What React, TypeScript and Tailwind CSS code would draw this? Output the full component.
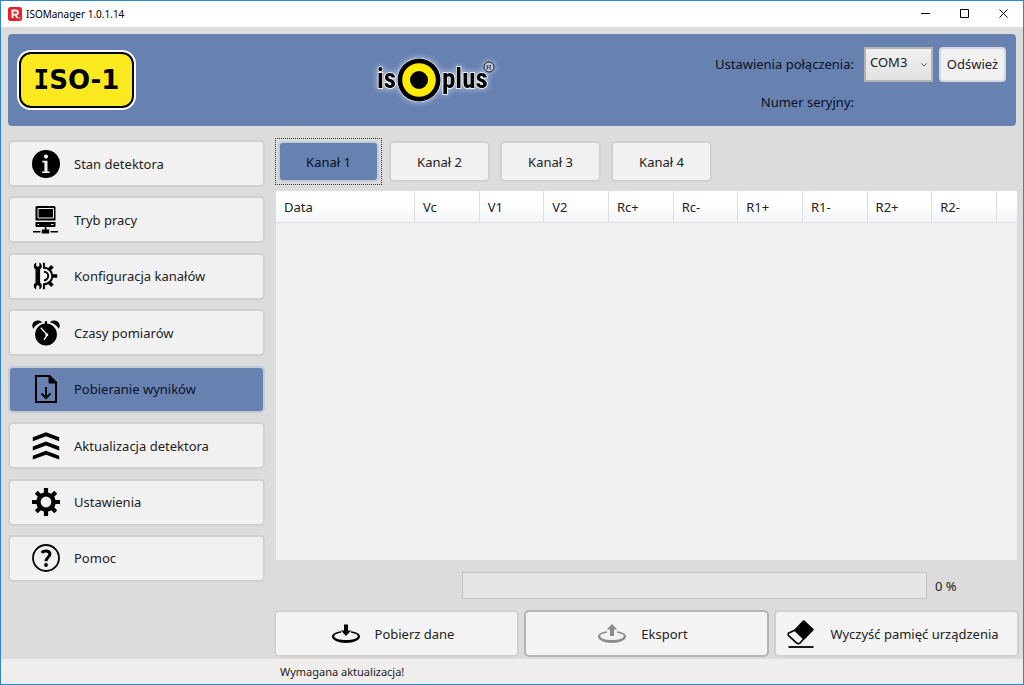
import React, { useState } from 'react';
import clsx from 'clsx';

const InfoIcon = () => (
  <svg viewBox="0 0 28 28" className="w-7 h-7 shrink-0">
    <circle cx="14" cy="14" r="14" fill="#000" />
    <circle cx="14" cy="6.6" r="2.1" fill="#f1f1f1" />
    <path d="M10.300 10.800h5.200v10.600h2.200V23h-7.600v-1.600h2.300v-9h-2.100z" fill="#f1f1f1" />
  </svg>
);

const ComputerIcon = () => (
  <svg viewBox="0 0 28 28" className="w-7 h-7 shrink-0">
    <path d="M5 0h17a1.500 1.500 0 0 1 1.500 1.500V14.500h-20V1.500A1.500 1.500 0 0 1 5 0z" />
    <path d="M6 2.500h15.500v9.500H6z" fill="none" stroke="#f1f1f1" />
    <path d="M3.500 16h20v4a1 1 0 0 1-1 1h-18a1 1 0 0 1-1-1z" />
    <path d="M5.500 18.500H7M19 18.500h2.500" stroke="#f1f1f1" strokeWidth="1.200" />
    <path d="M12.800 21h1.600v2.500h2.800v4h-7.400v-4h3zM1 25h7.500v1.500H1zM18.500 25H26v1.500h-7.500z" />
  </svg>
);

const ToolsIcon = () => (
  <svg viewBox="0 0 28 28" className="w-7 h-7 shrink-0">
    <path d="M4.200.5v3.200l1.600 1.200 1.600-1.200V.5C9 1.200 9.800 2.600 9.800 4.200c0 1.300-.6 2.300-1.700 3v13.600c1.100.7 1.700 1.700 1.700 3 0 1.600-.8 3-2.400 3.700v-3.200l-1.600-1.200-1.600 1.200v3.200c-1.600-.7-2.400-2.100-2.400-3.700 0-1.300.6-2.300 1.700-3V7.200c-1.100-.7-1.700-1.700-1.700-3 0-1.600.8-3 2.400-3.700z" />
    <path d="M12 .8v5c4.700 0 8.300 3.700 8.300 8.200s-3.600 8.200-8.300 8.200v5" fill="none" stroke="#000" strokeWidth="1.900" />
    <path d="M12 9.800a4.200 4.200 0 0 1 0 8.400" fill="none" stroke="#000" strokeWidth="1.900" />
    <path d="M17.200 7.400l3.200-3.200M20.500 14h4.700M17.200 20.600l3.200 3.200" stroke="#000" strokeWidth="3.600" />
  </svg>
);

const AlarmIcon = () => (
  <svg viewBox="0 0 28 28" className="w-7 h-7 shrink-0">
    <path d="M1.200 9.800C-.8 6.500.500 2.600 4.200 1.700c2.300-.6 4.500 0 5.900 1.600C6 4.500 3.100 6.700 1.200 9.800zM26.800 9.800c2-3.300.7-7.200-3-8.100-2.300-.6-4.500 0-5.900 1.600 4.100 1.200 7 3.400 8.900 6.500z" />
    <circle cx="14" cy="15.500" r="10.900" />
    <path d="M12.900 2.200h2.200V6h-2.200z" />
    <path d="M8.800 8.800l6.400 7-3.200 5" fill="none" stroke="#f1f1f1" strokeWidth="1.400" />
    <circle cx="14.800" cy="15.700" r="1.500" fill="#f1f1f1" />
  </svg>
);

const FileDownIcon = () => (
  <svg viewBox="0 0 28 28" className="w-7 h-7 shrink-0">
    <path d="M4 1h13.500l6.500 6.500V27H4z" fill="none" stroke="#000" strokeWidth="2" />
    <path d="M17 1l7 7h-7z" stroke="#000" />
    <path d="M14 12v11M9.500 18.500L14 23l4.500-4.500" fill="none" stroke="#000" strokeWidth="2" />
  </svg>
);

const ChevronsIcon = () => (
  <svg viewBox="0 0 28 28" className="w-7 h-7 shrink-0">
    <path d="M14 .3l13.200 5v3.900L14 4.300.8 9.200V5.300zM14 9.500l13.200 5v3.900L14 13.500.8 18.400v-3.900zM14 18.700l13.200 5v3.900L14 22.700.8 27.600v-3.900z" />
  </svg>
);

const GearIcon = () => (
  <svg viewBox="0 0 28 28" className="w-7 h-7 shrink-0">
    <path d="M14 0v28M0 14h28M4.300 4.300l19.400 19.400M23.700 4.300L4.300 23.700" stroke="#000" strokeWidth="4.200" />
    <circle cx="14" cy="14" r="9.800" />
    <circle cx="14" cy="14" r="5.400" fill="#f1f1f1" />
  </svg>
);

const HelpIcon = () => (
  <svg viewBox="0 0 28 28" className="w-7 h-7 shrink-0">
    <circle cx="14" cy="14" r="13" fill="none" stroke="#000" strokeWidth="1.800" />
    <path d="M9.800 8.800c.9-1.300 2.300-1.800 4-1.800 2.700 0 4.100 1.200 4.100 3.200 0 3-3.900 3.200-3.900 7" fill="none" stroke="#000" strokeWidth="3" />
    <circle cx="14" cy="21" r="1.900" />
  </svg>
);

const DiskIcon: React.FC<{ up?: boolean }> = ({ up }) => (
  <svg viewBox="0 0 28 20" className="w-7 h-5 shrink-0" fill={up ? '#8a8a8a' : '#000'}>
    <path d="M9 7.300C3.800 8 0 9.900 0 12.600 0 16.200 6 19 14 19s14-2.800 14-6.400c0-2.700-3.800-4.600-9-5.300v1.500c4 .6 6.800 1.800 6.800 3.400 0 2.200-5.300 3.800-11.800 3.800S2.200 14.400 2.200 12.200c0-1.600 2.800-2.800 6.800-3.400z" />
    <path d={up ? 'M14 0l5.200 5.500h-3.200V12h-4V5.500H8.800z' : 'M12 .5h4v6h3.200L14 12 8.800 6.500H12z'} />
  </svg>
);

const EraserIcon = () => (
  <svg viewBox="0 0 28 28" className="w-7 h-7 shrink-0">
    <path d="M17.500.5l8.800 8.300c.6.600.6 1.200 0 1.800l-8.800 9L7.200 9.800l8.700-9.200c.5-.5 1.100-.6 1.600-.1z" />
    <path d="M7.800 10.200l9 8.700-3.600 3.900c-1 .9-2.600 1-3.700 0l-7.700-7c-1-.9-1-2 0-2.900z" fill="none" stroke="#000" strokeWidth="1.600" />
    <path d="M1.500 27h25" stroke="#000" strokeWidth="1.800" />
  </svg>
);

const IsoPlusLogo = () => (
  <svg viewBox="0 0 120 50" className="w-[120px] h-[50px] overflow-visible" style={{ filter: 'drop-shadow(0 0 3px #c5d3ee)' }}>
    <g
      fontFamily='"Liberation Sans Narrow", "Roboto Condensed", "DejaVu Sans Condensed", sans-serif'
      fontWeight="bold"
      fontSize="27"
      stroke="#fff"
      strokeWidth="1.500"
      paintOrder="stroke"
    >
      <text x="20" y="33" textAnchor="end">is</text>
      <text x="66" y="33">plus</text>
    </g>
    <circle cx="43" cy="25" r="22" fill="#fff" />
    <circle cx="43" cy="25" r="21.500" />
    <circle cx="43" cy="25" r="16.800" fill="#ffed00" />
    <circle cx="43" cy="25" r="9" />
    <circle cx="113" cy="12" r="5" fill="#c5d0e4" stroke="#111" />
    <text x="113" y="15" textAnchor="middle" fontSize="8" fontFamily='"Liberation Sans", sans-serif'>R</text>
  </svg>
);

const menuItems = [
  { id: 'stan', label: 'Stan detektora', icon: <InfoIcon /> },
  { id: 'tryb', label: 'Tryb pracy', icon: <ComputerIcon /> },
  { id: 'konfiguracja', label: 'Konfiguracja kanałów', icon: <ToolsIcon /> },
  { id: 'czasy', label: 'Czasy pomiarów', icon: <AlarmIcon /> },
  { id: 'pobieranie', label: 'Pobieranie wyników', icon: <FileDownIcon /> },
  { id: 'aktualizacja', label: 'Aktualizacja detektora', icon: <ChevronsIcon /> },
  { id: 'ustawienia', label: 'Ustawienia', icon: <GearIcon /> },
  { id: 'pomoc', label: 'Pomoc', icon: <HelpIcon /> },
];

const channels = ['Kanał 1', 'Kanał 2', 'Kanał 3', 'Kanał 4'];
const columns = ['Vc', 'V1', 'V2', 'Rc+', 'Rc-', 'R1+', 'R1-', 'R2+', 'R2-'];

const TitleBar = () => (
  <div className="h-[26px] bg-white flex items-center pl-[7px] text-black">
    <svg viewBox="0 0 14 14" className="w-[14px] h-[14px]">
      <rect width="14" height="14" rx="2.500" fill="#e3232b" />
      <path d="M4.500 11V3.500h3.300a2 2 0 0 1 0 4.200H5M7.300 7.700L9.500 11" fill="none" stroke="#fff" strokeWidth="1.800" />
      <circle cx="11.400" cy="11" r=".8" fill="#fff" />
    </svg>
    <span className="ml-1 text-[10px] leading-4">ISOManager 1.0.1.14</span>
    <div className="ml-auto flex items-center">
      <button aria-label="Minimalizuj" className="w-[39px] h-6 flex items-center justify-center">
        <svg viewBox="0 0 10 10" className="w-[10px] h-[10px]"><path d="M0 4.500h9" stroke="#000" /></svg>
      </button>
      <button aria-label="Maksymalizuj" className="w-[39px] h-6 flex items-center justify-center">
        <svg viewBox="0 0 10 10" className="w-[10px] h-[10px]"><path d="M.5.5h8v8h-8z" fill="none" stroke="#000" /></svg>
      </button>
      <button aria-label="Zamknij" className="w-[39px] h-6 flex items-center justify-center">
        <svg viewBox="0 0 10 10" className="w-[10px] h-[10px]"><path d="M.5.5l8 8M8.500.5l-8 8" stroke="#000" /></svg>
      </button>
    </div>
  </div>
);

const Header = () => (
  <header className="mx-[7px] mt-[7px] h-[92px] rounded bg-[#6781b1] flex items-center pl-[9px] pr-[10px]">
    <div className="rounded-[14px] bg-white p-[2px]">
      <div className="w-[115px] h-14 rounded-xl border-2 border-black bg-[#f9e91e] flex items-center justify-center font-['DejaVu_Sans'] font-bold text-[26px] leading-8 text-black">
        <span className="font-['DejaVu_Sans_Mono']">I</span>SO-1
      </div>
    </div>
    <div className="flex-1 flex justify-center pl-[22px]">
      <IsoPlusLogo />
    </div>
    <div className="grid grid-cols-[auto_auto] gap-x-[10px] items-center pt-[5px] text-[#0a1224]">
      <label htmlFor="port" className="text-right">Ustawienia połączenia:</label>
      <div className="flex gap-[6px]">
        <div className="relative">
          <select
            id="port"
            defaultValue="COM3"
            className="appearance-none w-[69px] h-[35px] border-2 border-[#b4b4b4] bg-linear-to-b from-[#f0f0f0] to-[#e2e2e2] pl-1 pb-1 text-[#222]"
          >
            <option>COM3</option>
          </select>
          <svg viewBox="0 0 6 4" className="absolute right-[6px] top-4 w-[6px] h-1 pointer-events-none">
            <path d="M.5.5L3 3 5.500.5" fill="none" stroke="#555" />
          </svg>
        </div>
        <button className="w-[67px] h-[35px] rounded border-2 border-[#d4d8e0] bg-[#f1f1f1] text-[#222]">Odśwież</button>
      </div>
      <span className="text-right h-[37px] leading-[41px]">Numer seryjny:</span>
    </div>
  </header>
);

export default function App() {
  const [activeItem, setActiveItem] = useState('pobieranie');
  const [activeChannel, setActiveChannel] = useState('Kanał 1');

  return (
    <div className="min-h-screen flex flex-col border border-[#2f86cf] bg-[#dcdcdc] font-['Noto_Sans',sans-serif] text-[13px] leading-5 text-[#222]">
      <TitleBar />
      <Header />

      <div className="flex-1 flex gap-[9px] mt-3 pl-[7px] pr-1 pb-[2px]">
        {/* Side menu */}
        <nav className="w-[257px] h-[444px] pt-[2px] shrink-0 flex flex-col justify-between">
          {menuItems.map((item) => (
            <button
              key={item.id}
              onClick={() => setActiveItem(item.id)}
              className={clsx(
                'h-[47px] rounded-[5px] border-2 flex items-center gap-[14px] pl-[22px]',
                activeItem === item.id
                  ? 'bg-[#6781b1] border-[#c4cad6] text-[#0a1224]'
                  : 'bg-[#f1f1f1] border-[#d0d0d0]'
              )}
            >
              {item.icon}
              <span>{item.label}</span>
            </button>
          ))}
        </nav>

        <main className="flex-1 min-w-0 flex flex-col">
          {/* Channels */}
          <div className="flex gap-1 pl-[1px]">
            {channels.map((name) => (
              <div
                key={name}
                className={clsx(
                  'p-[2px] border border-dotted',
                  activeChannel === name ? 'border-[#333]' : 'border-transparent'
                )}
              >
                <button
                  onClick={() => setActiveChannel(name)}
                  className={clsx(
                    'w-[101px] h-[41px] rounded-[5px] border-2',
                    activeChannel === name
                      ? 'bg-[#6781b1] border-[#c4cad6] text-[#0a1224]'
                      : 'bg-[#f1f1f1] border-[#d0d0d0]'
                  )}
                >
                  {name}
                </button>
              </div>
            ))}
          </div>

          {/* Results */}
          <div className="flex-1 mx-[2px] mt-[6px] bg-[#f0f0f0]">
            <table className="w-full table-fixed border-separate border-spacing-0">
              <thead>
                <tr className="h-8 bg-linear-to-b from-white from-40% to-[#f1f3f5]">
                  <th className="w-[139px] pl-2 text-left font-normal border-r border-b border-[#dcdfe2]">Data</th>
                  {columns.map((name) => (
                    <th key={name} className="pl-2 text-left font-normal border-r border-b border-[#dcdfe2]">{name}</th>
                  ))}
                  <td className="w-5 border-b border-[#dcdfe2]" />
                </tr>
              </thead>
            </table>
          </div>

          <div className="flex items-center mt-3 pr-[2px]">
            <div className="w-[188px]" />
            <progress
              aria-label="Postęp pobierania"
              value={0}
              max={100}
              className="flex-1 h-[27px] appearance-none border border-[#c3c3c3] [&::-webkit-progress-bar]:bg-[#e6e6e6] [&::-webkit-progress-value]:bg-[#6781b1]"
            />
            <span className="w-[90px] pl-2">0 %</span>
          </div>

          <div className="grid grid-cols-3 gap-[5px] mt-[11px]">
            <button className="h-[47px] rounded-[5px] border-2 border-[#d0d0d0] bg-[#f3f3f3] flex items-center justify-center gap-[15px] pr-[7px]">
              <DiskIcon />
              Pobierz dane
            </button>
            <button className="h-[47px] rounded-[5px] border-2 border-[#b4b4b4] bg-[#f3f3f3] flex items-center justify-center gap-[15px] pr-[7px]">
              <DiskIcon up />
              Eksport
            </button>
            <button className="h-[47px] rounded-[5px] border-2 border-[#d0d0d0] bg-[#f3f3f3] flex items-center justify-center gap-[15px] pr-[7px]">
              <EraserIcon />
              Wyczyść pamięć urządzenia
            </button>
          </div>
        </main>
      </div>

      <footer className="h-[25px] bg-[#f0eded] pl-[279px] text-[11px] leading-[26px]">Wymagana aktualizacja!</footer>
    </div>
  );
}
